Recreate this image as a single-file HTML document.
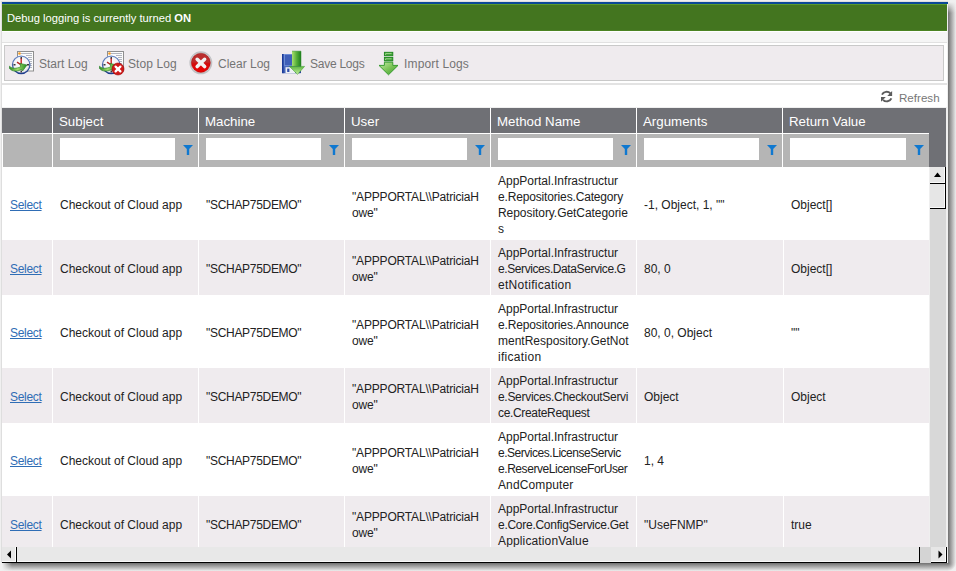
<!DOCTYPE html>
<html><head><meta charset="utf-8"><style>
*{box-sizing:border-box;margin:0;padding:0}
html,body{width:956px;height:571px;overflow:hidden;background:#fff;font-family:"Liberation Sans",sans-serif}
div,span,svg{position:absolute}
b{position:static}
.t{white-space:nowrap;line-height:16px;font-size:12px;color:#222}
.sel{color:#2f6db5;text-decoration:underline}
.tbt{color:#747474;font-size:12px;line-height:16px;white-space:nowrap}
.hd{color:#fff;font-size:13.3px;line-height:16px;white-space:nowrap}
</style></head><body>
<div style="left:0px;top:0px;width:956px;height:571px;background:#f0f0f0;"></div>
<div style="left:1px;top:1px;width:947px;height:562px;background:#dedede;"></div>
<div style="left:948px;top:2px;width:8px;height:561px;background:linear-gradient(to right,#707070,#ededed);"></div>
<div style="left:948px;top:2px;width:8px;height:11px;background:linear-gradient(to bottom,#f0f0f0,rgba(240,240,240,0));"></div>
<div style="left:2px;top:563px;width:946px;height:8px;background:linear-gradient(to bottom,#707070,#ededed);"></div>
<div style="left:2px;top:563px;width:10px;height:8px;background:linear-gradient(to right,#f0f0f0,rgba(240,240,240,0));"></div>
<div style="left:948px;top:563px;width:8px;height:8px;background:radial-gradient(circle at 0 0,#707070,#f0f0f0 8px);"></div>
<div style="left:2px;top:2px;width:946px;height:561px;background:#efefef;"></div>
<div style="left:2px;top:2px;width:946px;height:2px;background:#0b4895;"></div>
<div style="left:2px;top:4px;width:945px;height:1px;background:#5a992a;"></div>
<div style="left:2px;top:5px;width:945px;height:25px;background:#43751f;"></div>
<div style="left:2px;top:30px;width:945px;height:1px;background:#4b8423;"></div>
<div style="left:7px;top:11px;color:#fff;font-size:11.2px;line-height:14px;white-space:nowrap">Debug logging is currently turned <b>ON</b></div>
<div style="left:2px;top:31px;width:945px;height:1px;background:#fff;"></div>
<div style="left:2px;top:32px;width:945px;height:10px;background:#f5f5f5;"></div>
<div style="left:2px;top:42px;width:945px;height:1px;background:#e1e1e1;"></div>
<div style="left:2px;top:43px;width:945px;height:64px;background:#fff;"></div>
<div style="left:4px;top:45px;width:940px;height:36px;background:#efebee;border:1px solid #c9c9c9"></div>
<div style="left:2px;top:83px;width:945px;height:2px;background:#e3e3e3;"></div>
<svg style="left:6px;top:48px" width="32" height="30" viewBox="0 0 32 30">
<defs>
<radialGradient id="facea" cx="0.45" cy="0.4" r="0.65"><stop offset="0" stop-color="#ffffff"/><stop offset="0.7" stop-color="#f2f0f4"/><stop offset="1" stop-color="#c9cbd6"/></radialGradient>
<linearGradient id="ringa" x1="0" y1="0" x2="0" y2="1"><stop offset="0" stop-color="#6f8cc8"/><stop offset="1" stop-color="#1d3c8c"/></linearGradient>
<linearGradient id="arra" x1="0" y1="0" x2="1" y2="0"><stop offset="0" stop-color="#2a8a22"/><stop offset="0.45" stop-color="#a6dc6a"/><stop offset="1" stop-color="#1f8a1f"/></linearGradient>
</defs>
<rect x="11.5" y="3.5" width="16" height="19.5" fill="#fbfbfb" stroke="#8f8f8f" stroke-width="1"/>
<g stroke="#a9adb8" stroke-width="0.9">
<line x1="15" y1="5.5" x2="26" y2="5.5"/><line x1="20" y1="7.5" x2="26" y2="7.5"/><line x1="22" y1="9.5" x2="26" y2="9.5"/><line x1="23" y1="11.5" x2="26" y2="11.5"/><line x1="24" y1="13.5" x2="26" y2="13.5"/><line x1="24" y1="15.5" x2="26" y2="15.5"/><line x1="24" y1="17.5" x2="26" y2="17.5"/><line x1="23" y1="19.5" x2="26" y2="19.5"/>
</g>
<circle cx="13.5" cy="5.5" r="1.3" fill="#f59a23"/>
<circle cx="15.2" cy="16.8" r="8.7" fill="url(#facea)" stroke="url(#ringa)" stroke-width="1.3"/>
<g fill="#3a3a3a"><rect x="14.5" y="9" width="1.5" height="2"/><rect x="14.5" y="22.5" width="1.5" height="2"/><rect x="7.5" y="16" width="2" height="1.5"/><rect x="21" y="16" width="2" height="1.5"/></g>
<path d="M15.2 16.8V10.6" stroke="#c42222" stroke-width="1.4"/>
<path d="M15.2 16.8L11 14.2" stroke="#b52020" stroke-width="1.4"/>
<path d="M3.5 18.2C6 20.6 10 21 14.6 18.8L14.1 15.4L21 17L16.6 23L15.6 21.4C11 24 6 23.6 3.5 20.6Z" fill="url(#arra)" stroke="#1f7d1f" stroke-width="0.6"/>

</svg>
<svg style="left:96px;top:48px" width="32" height="30" viewBox="0 0 32 30">
<defs>
<radialGradient id="faceb" cx="0.45" cy="0.4" r="0.65"><stop offset="0" stop-color="#ffffff"/><stop offset="0.7" stop-color="#f2f0f4"/><stop offset="1" stop-color="#c9cbd6"/></radialGradient>
<linearGradient id="ringb" x1="0" y1="0" x2="0" y2="1"><stop offset="0" stop-color="#6f8cc8"/><stop offset="1" stop-color="#1d3c8c"/></linearGradient>
<linearGradient id="arrb" x1="0" y1="0" x2="1" y2="0"><stop offset="0" stop-color="#2a8a22"/><stop offset="0.45" stop-color="#a6dc6a"/><stop offset="1" stop-color="#1f8a1f"/></linearGradient>
</defs>
<rect x="11.5" y="3.5" width="16" height="19.5" fill="#fbfbfb" stroke="#8f8f8f" stroke-width="1"/>
<g stroke="#a9adb8" stroke-width="0.9">
<line x1="15" y1="5.5" x2="26" y2="5.5"/><line x1="20" y1="7.5" x2="26" y2="7.5"/><line x1="22" y1="9.5" x2="26" y2="9.5"/><line x1="23" y1="11.5" x2="26" y2="11.5"/><line x1="24" y1="13.5" x2="26" y2="13.5"/><line x1="24" y1="15.5" x2="26" y2="15.5"/><line x1="24" y1="17.5" x2="26" y2="17.5"/><line x1="23" y1="19.5" x2="26" y2="19.5"/>
</g>
<circle cx="13.5" cy="5.5" r="1.3" fill="#f59a23"/>
<circle cx="15.2" cy="16.8" r="8.7" fill="url(#faceb)" stroke="url(#ringb)" stroke-width="1.3"/>
<g fill="#3a3a3a"><rect x="14.5" y="9" width="1.5" height="2"/><rect x="14.5" y="22.5" width="1.5" height="2"/><rect x="7.5" y="16" width="2" height="1.5"/><rect x="21" y="16" width="2" height="1.5"/></g>
<path d="M15.2 16.8V10.6" stroke="#c42222" stroke-width="1.4"/>
<path d="M15.2 16.8L11 14.2" stroke="#b52020" stroke-width="1.4"/>
<path d="M3.5 18.2C6 20.6 10 21 14.6 18.8L14.1 15.4L21 17L16.6 23L15.6 21.4C11 24 6 23.6 3.5 20.6Z" fill="url(#arrb)" stroke="#1f7d1f" stroke-width="0.6"/>
<circle cx="22" cy="21" r="6" fill="#d01818" stroke="#a00000" stroke-width="0.6"/>
<path d="M19.6 18.6L24.4 23.4M24.4 18.6L19.6 23.4" stroke="#fff" stroke-width="2.3" stroke-linecap="round"/>
</svg>
<svg style="left:186px;top:48px" width="30" height="30" viewBox="0 0 30 30">
<defs>
<linearGradient id="cr" x1="0" y1="0" x2="0" y2="1"><stop offset="0" stop-color="#b83030"/><stop offset="0.45" stop-color="#c02a2a"/><stop offset="0.55" stop-color="#d40c0c"/><stop offset="1" stop-color="#f00000"/></linearGradient>
</defs>
<circle cx="14.85" cy="14.8" r="10.8" fill="#f4f2f4" stroke="#bfc1c4" stroke-width="1.3"/>
<circle cx="14.85" cy="14.8" r="9.6" fill="url(#cr)" stroke="#8a0c0c" stroke-width="0.5"/>
<path d="M11.2 11.3L18.6 18.5M18.6 11.3L11.2 18.5" stroke="#f2f2f2" stroke-width="3.6" stroke-linecap="round"/>
</svg>
<svg style="left:278px;top:48px" width="30" height="30" viewBox="0 0 30 30">
<defs>
<linearGradient id="fb" x1="0" y1="0" x2="1" y2="1"><stop offset="0" stop-color="#6d8fdc"/><stop offset="1" stop-color="#1f3b94"/></linearGradient>
<linearGradient id="ga" x1="0" y1="0" x2="1" y2="0"><stop offset="0" stop-color="#a8e070"/><stop offset="0.5" stop-color="#58b03a"/><stop offset="1" stop-color="#1e7d1e"/></linearGradient>
<linearGradient id="gh" x1="0" y1="0" x2="0" y2="1"><stop offset="0" stop-color="#5fb840"/><stop offset="1" stop-color="#c4eda0"/></linearGradient>
</defs>
<rect x="4" y="6" width="19" height="19.2" rx="0.8" fill="url(#fb)"/>
<rect x="4" y="6" width="1.6" height="19.2" fill="#1c3a98"/>
<rect x="6.6" y="6.5" width="8" height="11" fill="#3f5fb8" stroke="#7f9de0" stroke-width="0.6"/>
<rect x="7.5" y="19.2" width="9.5" height="6" fill="#eef0f6"/>
<rect x="9.2" y="20.6" width="2.2" height="3.4" fill="#2d4ca8"/>
<path d="M14 3.2H23V18.4H14Z" fill="url(#ga)"/>
<path d="M11.4 18.4H26.6L19.5 26.4Z" fill="url(#gh)" stroke="#3c9a2c" stroke-width="0.5"/>
<path d="M14 3.2H23V18.4" fill="none" stroke="#2a8a24" stroke-width="0.5"/>
</svg>
<svg style="left:373px;top:48px" width="30" height="30" viewBox="0 0 30 30">
<defs>
<linearGradient id="ib" x1="0" y1="0" x2="1" y2="1"><stop offset="0" stop-color="#c6eca8"/><stop offset="0.5" stop-color="#7cc458"/><stop offset="1" stop-color="#3a9a2c"/></linearGradient>
</defs>
<rect x="11.4" y="4.3" width="8.4" height="3.5" fill="#3c9e34" stroke="#1f861f" stroke-width="0.9"/>
<path d="M12.6 6.9V5.6H18.6" fill="none" stroke="#b8e6a0" stroke-width="0.8"/>
<rect x="11.4" y="9.5" width="8.4" height="3.4" fill="#3c9e34" stroke="#1f861f" stroke-width="0.9"/>
<path d="M12.6 12V10.8H18.6" fill="none" stroke="#b8e6a0" stroke-width="0.8"/>
<path d="M11.4 14.2H19.8V17.4H25L15.5 26.8L6 17.4H11.4Z" fill="url(#ib)" stroke="#2a9624" stroke-width="0.9"/>
</svg>
<svg style="left:876px;top:86px" width="22" height="20" viewBox="0 0 22 20">
<g fill="none" stroke="#5c5c5c" stroke-width="1.9">
<path d="M6 8.6A5 4.6 0 0 1 14.4 7.4"/>
<path d="M15.4 12.4A5 4.6 0 0 1 7 13.8"/>
</g>
<path d="M16.1 5V9.9H11.3Z" fill="#5c5c5c"/>
<path d="M5 11H9.8L5 15.8Z" fill="#5c5c5c"/>
</svg>
<div class="tbt" style="left:39px;top:56px;letter-spacing:0px">Start Log</div>
<div class="tbt" style="left:128px;top:56px;letter-spacing:0.1px">Stop Log</div>
<div class="tbt" style="left:218px;top:56px;letter-spacing:0px">Clear Log</div>
<div class="tbt" style="left:310px;top:56px;letter-spacing:-0.25px">Save Logs</div>
<div class="tbt" style="left:404px;top:56px;letter-spacing:0.15px">Import Logs</div>
<div class="tbt" style="left:899px;top:90px;color:#777;font-size:11.6px">Refresh</div>
<div style="left:2px;top:108px;width:944px;height:59px;background:#6f7075;"></div>
<div style="left:2px;top:133px;width:927px;height:1px;background:#fff;"></div>
<div style="left:2px;top:134px;width:927px;height:33px;background:#b5b5b5;"></div>
<div style="left:2px;top:133px;width:1px;height:34px;background:#fff;"></div>
<div class="hd" style="left:59px;top:114px">Subject</div>
<div class="hd" style="left:205px;top:114px">Machine</div>
<div class="hd" style="left:351px;top:114px">User</div>
<div class="hd" style="left:497px;top:114px">Method Name</div>
<div class="hd" style="left:643px;top:114px">Arguments</div>
<div class="hd" style="left:789px;top:114px">Return Value</div>
<div style="left:52px;top:108px;width:1px;height:59px;background:#fff;"></div>
<div style="left:198px;top:108px;width:1px;height:59px;background:#fff;"></div>
<div style="left:344px;top:108px;width:1px;height:59px;background:#fff;"></div>
<div style="left:490px;top:108px;width:1px;height:59px;background:#fff;"></div>
<div style="left:636px;top:108px;width:1px;height:59px;background:#fff;"></div>
<div style="left:782px;top:108px;width:1px;height:59px;background:#fff;"></div>
<div style="left:60px;top:138px;width:115px;height:22px;background:#fff;"></div>
<svg style="left:183px;top:145px" width="10" height="10" viewBox="0 0 10 10"><path d="M0 0H10L6.2 4V10H3.8V4Z" fill="#0f78d0"/></svg>
<div style="left:206px;top:138px;width:115px;height:22px;background:#fff;"></div>
<svg style="left:329px;top:145px" width="10" height="10" viewBox="0 0 10 10"><path d="M0 0H10L6.2 4V10H3.8V4Z" fill="#0f78d0"/></svg>
<div style="left:352px;top:138px;width:115px;height:22px;background:#fff;"></div>
<svg style="left:475px;top:145px" width="10" height="10" viewBox="0 0 10 10"><path d="M0 0H10L6.2 4V10H3.8V4Z" fill="#0f78d0"/></svg>
<div style="left:498px;top:138px;width:115px;height:22px;background:#fff;"></div>
<svg style="left:621px;top:145px" width="10" height="10" viewBox="0 0 10 10"><path d="M0 0H10L6.2 4V10H3.8V4Z" fill="#0f78d0"/></svg>
<div style="left:644px;top:138px;width:115px;height:22px;background:#fff;"></div>
<svg style="left:767px;top:145px" width="10" height="10" viewBox="0 0 10 10"><path d="M0 0H10L6.2 4V10H3.8V4Z" fill="#0f78d0"/></svg>
<div style="left:790px;top:138px;width:116px;height:22px;background:#fff;"></div>
<svg style="left:914px;top:145px" width="10" height="10" viewBox="0 0 10 10"><path d="M0 0H10L6.2 4V10H3.8V4Z" fill="#0f78d0"/></svg>
<div style="left:2px;top:167px;width:927px;height:73px;background:#fff;"></div>
<div class="t sel" style="left:10px;top:197px;letter-spacing:-0.3px">Select</div>
<div class="t" style="left:60px;top:197px">Checkout of Cloud app</div>
<div class="t" style="left:206px;top:197px;letter-spacing:-0.3px">"SCHAP75DEMO"</div>
<div class="t" style="left:352px;top:189px;letter-spacing:-0.18px">"APPPORTAL\\PatriciaH<br>owe"</div>
<div class="t" style="left:498px;top:173px;letter-spacing:0px">AppPortal.Infrastructur</div>
<div class="t" style="left:498px;top:189px;letter-spacing:-0.16px">e.Repositories.Category</div>
<div class="t" style="left:498px;top:205px;letter-spacing:-0.06px">Repository.GetCategorie</div>
<div class="t" style="left:498px;top:221px;letter-spacing:0px">s</div>
<div class="t" style="left:644px;top:197px">-1, Object, 1, ""</div>
<div class="t" style="left:791px;top:197px">Object[]</div>
<div style="left:2px;top:240px;width:927px;height:55px;background:#efebee;"></div>
<div style="left:52px;top:240px;width:1px;height:55px;background:#fff;"></div>
<div style="left:198px;top:240px;width:1px;height:55px;background:#fff;"></div>
<div style="left:344px;top:240px;width:1px;height:55px;background:#fff;"></div>
<div style="left:490px;top:240px;width:1px;height:55px;background:#fff;"></div>
<div style="left:636px;top:240px;width:1px;height:55px;background:#fff;"></div>
<div style="left:783px;top:240px;width:1px;height:55px;background:#fff;"></div>
<div class="t sel" style="left:10px;top:261px;letter-spacing:-0.3px">Select</div>
<div class="t" style="left:60px;top:261px">Checkout of Cloud app</div>
<div class="t" style="left:206px;top:261px;letter-spacing:-0.3px">"SCHAP75DEMO"</div>
<div class="t" style="left:352px;top:253px;letter-spacing:-0.18px">"APPPORTAL\\PatriciaH<br>owe"</div>
<div class="t" style="left:498px;top:245px;letter-spacing:0px">AppPortal.Infrastructur</div>
<div class="t" style="left:498px;top:261px;letter-spacing:-0.41px">e.Services.DataService.G</div>
<div class="t" style="left:498px;top:277px;letter-spacing:0.3px">etNotification</div>
<div class="t" style="left:644px;top:261px">80, 0</div>
<div class="t" style="left:791px;top:261px">Object[]</div>
<div style="left:2px;top:295px;width:927px;height:73px;background:#fff;"></div>
<div class="t sel" style="left:10px;top:325px;letter-spacing:-0.3px">Select</div>
<div class="t" style="left:60px;top:325px">Checkout of Cloud app</div>
<div class="t" style="left:206px;top:325px;letter-spacing:-0.3px">"SCHAP75DEMO"</div>
<div class="t" style="left:352px;top:317px;letter-spacing:-0.18px">"APPPORTAL\\PatriciaH<br>owe"</div>
<div class="t" style="left:498px;top:301px;letter-spacing:0px">AppPortal.Infrastructur</div>
<div class="t" style="left:498px;top:317px;letter-spacing:-0.14px">e.Repositories.Announce</div>
<div class="t" style="left:498px;top:333px;letter-spacing:0px">mentRespository.GetNot</div>
<div class="t" style="left:498px;top:349px;letter-spacing:0.3px">ification</div>
<div class="t" style="left:644px;top:325px">80, 0, Object</div>
<div class="t" style="left:791px;top:325px">""</div>
<div style="left:2px;top:368px;width:927px;height:55px;background:#efebee;"></div>
<div style="left:52px;top:368px;width:1px;height:55px;background:#fff;"></div>
<div style="left:198px;top:368px;width:1px;height:55px;background:#fff;"></div>
<div style="left:344px;top:368px;width:1px;height:55px;background:#fff;"></div>
<div style="left:490px;top:368px;width:1px;height:55px;background:#fff;"></div>
<div style="left:636px;top:368px;width:1px;height:55px;background:#fff;"></div>
<div style="left:783px;top:368px;width:1px;height:55px;background:#fff;"></div>
<div class="t sel" style="left:10px;top:389px;letter-spacing:-0.3px">Select</div>
<div class="t" style="left:60px;top:389px">Checkout of Cloud app</div>
<div class="t" style="left:206px;top:389px;letter-spacing:-0.3px">"SCHAP75DEMO"</div>
<div class="t" style="left:352px;top:381px;letter-spacing:-0.18px">"APPPORTAL\\PatriciaH<br>owe"</div>
<div class="t" style="left:498px;top:373px;letter-spacing:0px">AppPortal.Infrastructur</div>
<div class="t" style="left:498px;top:389px;letter-spacing:-0.3px">e.Services.CheckoutServi</div>
<div class="t" style="left:498px;top:405px;letter-spacing:-0.33px">ce.CreateRequest</div>
<div class="t" style="left:644px;top:389px">Object</div>
<div class="t" style="left:791px;top:389px">Object</div>
<div style="left:2px;top:423px;width:927px;height:73px;background:#fff;"></div>
<div class="t sel" style="left:10px;top:453px;letter-spacing:-0.3px">Select</div>
<div class="t" style="left:60px;top:453px">Checkout of Cloud app</div>
<div class="t" style="left:206px;top:453px;letter-spacing:-0.3px">"SCHAP75DEMO"</div>
<div class="t" style="left:352px;top:445px;letter-spacing:-0.18px">"APPPORTAL\\PatriciaH<br>owe"</div>
<div class="t" style="left:498px;top:429px;letter-spacing:0px">AppPortal.Infrastructur</div>
<div class="t" style="left:498px;top:445px;letter-spacing:-0.47px">e.Services.LicenseServic</div>
<div class="t" style="left:498px;top:461px;letter-spacing:-0.44px">e.ReserveLicenseForUser</div>
<div class="t" style="left:498px;top:477px;letter-spacing:0.12px">AndComputer</div>
<div class="t" style="left:644px;top:453px">1, 4</div>
<div style="left:2px;top:496px;width:927px;height:55px;background:#efebee;"></div>
<div style="left:52px;top:496px;width:1px;height:55px;background:#fff;"></div>
<div style="left:198px;top:496px;width:1px;height:55px;background:#fff;"></div>
<div style="left:344px;top:496px;width:1px;height:55px;background:#fff;"></div>
<div style="left:490px;top:496px;width:1px;height:55px;background:#fff;"></div>
<div style="left:636px;top:496px;width:1px;height:55px;background:#fff;"></div>
<div style="left:783px;top:496px;width:1px;height:55px;background:#fff;"></div>
<div class="t sel" style="left:10px;top:517px;letter-spacing:-0.3px">Select</div>
<div class="t" style="left:60px;top:517px">Checkout of Cloud app</div>
<div class="t" style="left:206px;top:517px;letter-spacing:-0.3px">"SCHAP75DEMO"</div>
<div class="t" style="left:352px;top:509px;letter-spacing:-0.18px">"APPPORTAL\\PatriciaH<br>owe"</div>
<div class="t" style="left:498px;top:501px;letter-spacing:0px">AppPortal.Infrastructur</div>
<div class="t" style="left:498px;top:517px;letter-spacing:-0.27px">e.Core.ConfigService.Get</div>
<div class="t" style="left:498px;top:533px;letter-spacing:0.14px">ApplicationValue</div>
<div class="t" style="left:644px;top:517px">"UseFNMP"</div>
<div class="t" style="left:791px;top:517px">true</div>
<div style="left:930px;top:167px;width:16px;height:380px;background:#d8d8d8;"></div>
<div style="left:930px;top:167px;width:16px;height:17px;background:#e6e6e6;border-right:1px solid #000;border-bottom:1px solid #000;box-shadow:inset -1px -1px 0 #fafafa"></div>
<svg style="left:933px;top:172px" width="9" height="6" viewBox="0 0 9 6"><path d="M1 5L4.5 0.5L8 5Z" fill="#000"/></svg>
<div style="left:930px;top:184px;width:16px;height:25px;background:#e6e6e6;border-right:1px solid #000;border-bottom:1px solid #000;box-shadow:inset -1px -1px 0 #fafafa"></div>
<div style="left:2px;top:547px;width:945px;height:16px;background:#d8d8d8;"></div>
<div style="left:2px;top:547px;width:15px;height:16px;background:#e6e6e6;border-right:1px solid #000;border-bottom:1px solid #000;box-shadow:inset -1px -1px 0 #fafafa"></div>
<svg style="left:6px;top:550px" width="6" height="9" viewBox="0 0 6 9"><path d="M5 0.5L1 4.5L5 8.5Z" fill="#000"/></svg>
<div style="left:17px;top:547px;width:903px;height:16px;background:#e8e8e8;border-right:1px solid #000;border-bottom:1px solid #000;box-shadow:inset 0 -1px 0 #fafafa"></div>
<div style="left:920px;top:547px;width:11px;height:16px;background:#d4d4d4;"></div>
<div style="left:931px;top:547px;width:16px;height:16px;background:#e6e6e6;border-right:1px solid #000;border-bottom:1px solid #000;box-shadow:inset -1px -1px 0 #fafafa"></div>
<svg style="left:937px;top:550px" width="6" height="9" viewBox="0 0 6 9"><path d="M1.5 0.5L5.5 4.5L1.5 8.5Z" fill="#000"/></svg>
</body></html>
